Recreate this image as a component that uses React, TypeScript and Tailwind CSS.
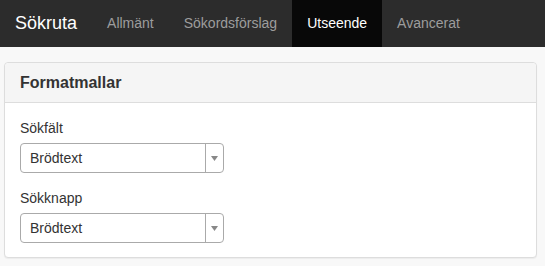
const tabs = ["Allmänt", "Sökordsförslag", "Utseende", "Avancerat"]

function SelectBox({ value }: { value: string }) {
  return (
    <div className="flex h-[30px] w-[204px] items-stretch rounded-[4px] border border-[#aaaaaa] bg-white">
      <div className="flex flex-1 items-center pl-[9px] text-[14px] text-[#333]">{value}</div>
      <div className="flex w-[18px] items-center justify-center border-l border-[#aaaaaa]">
        <svg width="7" height="5" viewBox="0 0 7 5">
          <path d="M0 0h7L3.5 5z" fill="#888" />
        </svg>
      </div>
    </div>
  )
}

export default function App() {
  return (
    <div className="min-h-[266px] bg-[#f8f8f8] font-['Liberation_Sans',Arial,sans-serif]">
      {/* Navbar */}
      <nav className="flex h-[47px] items-stretch bg-[#2c2c2c]">
        <div className="flex items-center px-[15px] text-[18px] text-white">Sökruta</div>
        <ul className="flex items-stretch">
          {tabs.map((tab) => (
            <li
              key={tab}
              className={`flex items-center px-[15px] text-[14px] ${
                tab === "Utseende" ? "bg-[#080808] text-white" : "text-[#9d9d9d]"
              }`}
            >
              {tab}
            </li>
          ))}
        </ul>
      </nav>

      {/* Panel */}
      <div className="mx-[4px] mt-[15px] w-[533px] rounded-[4px] border border-[#dddddd] bg-white shadow-[0_1px_1px_rgba(0,0,0,0.05)]">
        <div className="rounded-t-[4px] border-b border-[#dddddd] bg-[#f5f5f5] px-[15px] py-[10px] text-[16px] font-bold leading-[19px] text-[#333]">
          Formatmallar
        </div>
        <div className="px-[15px] pt-[15px] pb-[14px]">
          <div className="mb-[15px]">
            <div className="mb-[5px] text-[14px] leading-[20px] text-[#333]">Sökfält</div>
            <SelectBox value="Brödtext" />
          </div>
          <div>
            <div className="mb-[5px] text-[14px] leading-[20px] text-[#333]">Sökknapp</div>
            <SelectBox value="Brödtext" />
          </div>
        </div>
      </div>
    </div>
  )
}
